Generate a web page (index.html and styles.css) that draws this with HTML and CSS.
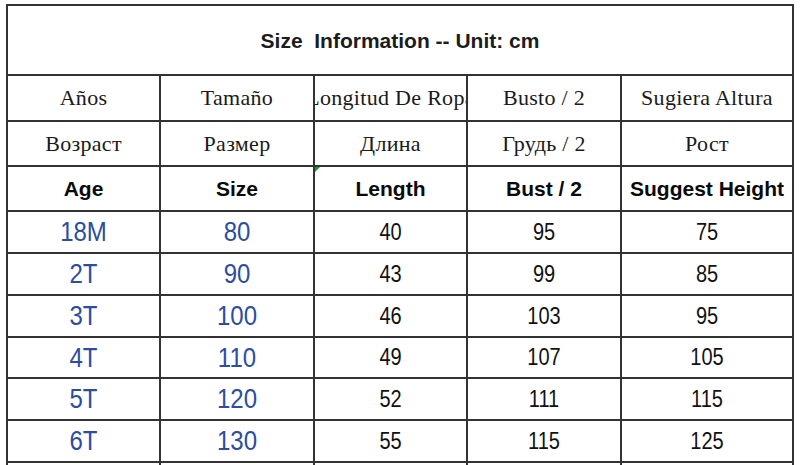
FILE: index.html
```html
<!DOCTYPE html>
<html>
<head>
<meta charset="utf-8">
<link rel="stylesheet" href="styles.css">
</head>
<body>
<div class="sheet">
  <div class="cell title">Size&nbsp; Information -- Unit: cm</div>

  <div class="cell es">Años</div>
  <div class="cell es">Tamaño</div>
  <div class="cell es">Longitud De Ropa</div>
  <div class="cell es">Busto / 2</div>
  <div class="cell es">Sugiera Altura</div>

  <div class="cell ru">Возраст</div>
  <div class="cell ru">Размер</div>
  <div class="cell ru">Длина</div>
  <div class="cell ru">Грудь / 2</div>
  <div class="cell ru">Рост</div>

  <div class="cell hd">Age</div>
  <div class="cell hd">Size</div>
  <div class="cell hd marked">Length</div>
  <div class="cell hd">Bust / 2</div>
  <div class="cell hd">Suggest Height</div>

  <div class="cell blue"><span>18M</span></div><div class="cell blue"><span>80</span></div><div class="cell num"><span>40</span></div><div class="cell num"><span>95</span></div><div class="cell num"><span>75</span></div>
  <div class="cell blue"><span>2T</span></div><div class="cell blue"><span>90</span></div><div class="cell num"><span>43</span></div><div class="cell num"><span>99</span></div><div class="cell num"><span>85</span></div>
  <div class="cell blue"><span>3T</span></div><div class="cell blue"><span>100</span></div><div class="cell num"><span>46</span></div><div class="cell num"><span>103</span></div><div class="cell num"><span>95</span></div>
  <div class="cell blue"><span>4T</span></div><div class="cell blue"><span>110</span></div><div class="cell num"><span>49</span></div><div class="cell num"><span>107</span></div><div class="cell num"><span>105</span></div>
  <div class="cell blue"><span>5T</span></div><div class="cell blue"><span>120</span></div><div class="cell num"><span>52</span></div><div class="cell num"><span>111</span></div><div class="cell num"><span>115</span></div>
  <div class="cell blue"><span>6T</span></div><div class="cell blue"><span>130</span></div><div class="cell num"><span>55</span></div><div class="cell num"><span>115</span></div><div class="cell num"><span>125</span></div>
  <div class="cell"></div><div class="cell"></div><div class="cell"></div><div class="cell"></div><div class="cell"></div>
</div>
</body>
</html>
```
FILE: styles.css
```css
html, body {
  margin: 0;
  padding: 0;
  background: #ffffff;
  overflow: hidden;
  width: 800px;
  height: 465px;
}

.sheet {
  margin: 4px 0 0 6px;
  width: 788px;
  height: 461px;
  overflow: hidden;
  box-sizing: border-box;
  padding: 2px 2px 0 2px;
  background: #333333;
  display: grid;
  grid-template-columns: 151px 152px 151px 152px 170px;
  grid-template-rows: 68px 44px 43px 43px 40px 40px 40px 39px 40px 40px 40px;
  gap: 2px;
}

.cell {
  background: #ffffff;
  display: flex;
  align-items: center;
  justify-content: center;
  overflow: hidden;
  white-space: nowrap;
  position: relative;
  color: #111111;
}

.cell span {
  display: inline-block;
  transform: scaleY(1.15);
}

.title {
  grid-column: 1 / 6;
  font-family: "Liberation Sans", Arial, sans-serif;
  font-weight: bold;
  font-size: 21px;
  color: #1c1c1c;
  padding-top: 2px;
}

.es, .ru {
  font-family: "Liberation Serif", "Times New Roman", serif;
  font-size: 22px;
  letter-spacing: 0.3px;
  color: #1a1a1a;
}

.hd {
  font-family: "Liberation Sans", Arial, sans-serif;
  font-weight: bold;
  font-size: 21px;
  color: #0a0a0a;
}

.num {
  font-family: "Liberation Sans", Arial, sans-serif;
  font-size: 20px;
  color: #111111;
}

.blue {
  font-family: "Liberation Sans", Arial, sans-serif;
  font-size: 24px;
  color: #2d4d9e;
}

.marked::before {
  content: "";
  position: absolute;
  top: 0;
  left: 0;
  width: 0;
  height: 0;
  border-top: 5px solid #1a9a2a;
  border-right: 5px solid transparent;
}
```
